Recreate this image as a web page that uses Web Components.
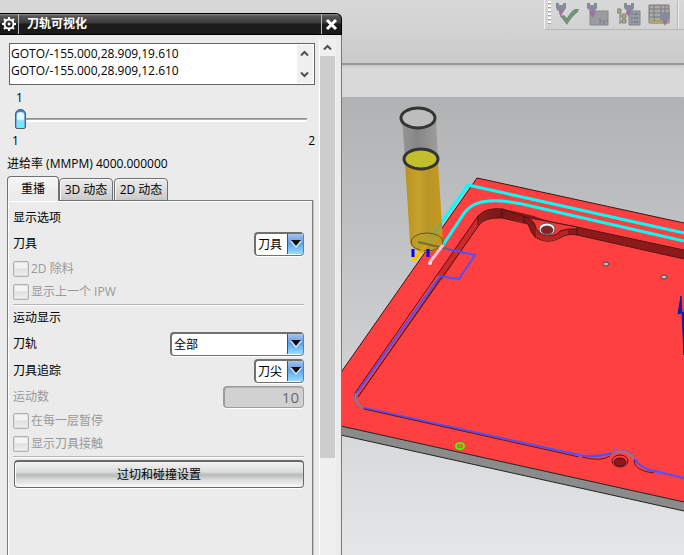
<!DOCTYPE html>
<html lang="zh-CN">
<head>
<meta charset="utf-8">
<title>刀轨可视化</title>
<style>
html,body{margin:0;height:100%}
body{font:12px/17px "Open Sans","Noto Sans CJK SC",sans-serif;color:#000;overflow:hidden}
</style>
</head>
<body>
<cam-app></cam-app>
<script>
function define(name, html, init){
  const t=document.createElement('template');
  t.innerHTML='<style>*{box-sizing:border-box}:host([hidden]){display:none}</style>'+html;
  customElements.define(name,class extends HTMLElement{
    connectedCallback(){
      if(this.shadowRoot)return;
      const r=this.attachShadow({mode:'open'});
      r.append(t.content.cloneNode(true));
      if(init)init.call(this,r);
    }
  });
}

define('tool-bar',`
<style>
:host{display:flex;flex-direction:column;height:97px;background:#d9d9d9}
.top{height:65px;display:flex;justify-content:flex-end;align-items:flex-start;background:linear-gradient(#d8d8d8,#cbcbcb);border-bottom:2px solid #989898;box-shadow:0 2px 2px #c8c8c8}
.tools{display:flex;align-items:center;height:30px;padding-left:3px;border-left:1px solid #f2f2f2;border-bottom:1px solid #b8b8b8;flex:0 0 140px}
.grip{width:3px;height:24px;margin-bottom:4px;background:repeating-linear-gradient(#fff 0 2px,#a4a4a4 2px 3px,transparent 3px 4px)}
button{border:0;background:none;padding:0;width:24px;height:26px;margin:0 3px 2px 4px}
svg{display:block;width:24px;height:26px}
.end{width:2px;height:28px;margin-left:2px;background:#eee;border-left:1px solid #b6b6b6}
</style>
<div class="top"><div class="tools" role="toolbar" aria-label="操作">
<span class="grip"></span>
<button aria-label="生成刀轨"><svg viewBox="0 0 24 26"><path d="M5 15l4-1 3 3Q16 10 20 8l4 0-1 3Q17 15 12 24z" fill="#719477"/><path d="M1 2h3v2h4V2h3v5l-2 3H3L1 7z" fill="#858b9b"/><path d="M4 10h5l-2 3-1 3-2-4z" fill="#a070a7"/></svg></button>
<button aria-label="重播刀轨"><svg viewBox="0 0 24 26"><path d="M4 10h18v14H4z" fill="#999ca1" stroke="#85888e"/><path d="M14 20h8M14 17v7M18 20v4" stroke="#7e8087" fill="none"/><path d="M1 2h3v2h4V2h3v5l-2 3H4L1 7z" fill="#858b9b"/><path d="M4 10h6l-3 7-3-4z" fill="#a070a7"/></svg></button>
<button aria-label="列出刀轨"><svg viewBox="0 0 24 26"><path d="M12 10h11v14H12z" fill="#969ba5" stroke="#81858e"/><path d="M14 13h2M17 13h4M14 17h2M17 17h4M14 21h2M17 21h4" stroke="#686d76"/><path d="M3 12v11M3 15h6M3 21h6" stroke="#777" fill="none"/><path d="M0 8h4v4H0zM5 13h4v4H5zM5 18h4v4H5z" fill="#aaa982" stroke="#858579"/><path d="M7 2h3v2h4V2h3v5l-2 3h-5L7 7z" fill="#858b9b"/><path d="M9 10h5l-2 6-3-4z" fill="#a070a7"/></svg></button>
<button aria-label="确认刀轨"><svg viewBox="0 0 24 26"><path d="M1 4h20v18H1z" fill="#a9aba9" stroke="#747674"/><path d="M1 19h20v3H1z" fill="#aaa56f"/><path d="M1 8h20M1 12h20M1 16h20M6 4v16M13 4v16M17 4v16" stroke="#7b7d7b"/><path d="M12 11h3v2h4v-2h3v5l-2 3h-6l-2-2z" fill="#858b9b"/><path d="M15 19h5l-3 6-2-4z" fill="#a070a7"/></svg></button>
<span class="end"></span>
</div></div>`);

define('part-view',`
<style>:host{display:block;min-height:0;background:linear-gradient(#b1b2b3,#e5e6e7)}svg{display:block;width:100%;height:100%}</style>
<svg viewBox="0 97 684 458" preserveAspectRatio="xMinYMin slice" role="img" aria-label="零件与刀具">
<defs>
<linearGradient id="y"><stop offset="0" stop-color="#b99020"/><stop offset=".35" stop-color="#c7a32c"/><stop offset=".6" stop-color="#b8952a"/><stop offset="1" stop-color="#c69a1c"/></linearGradient>
<linearGradient id="g"><stop offset="0" stop-color="#929292"/><stop offset=".4" stop-color="#7f7f7f"/><stop offset="1" stop-color="#999"/></linearGradient>
<linearGradient id="w"><stop offset="0" stop-color="#b62a2a"/><stop offset=".25" stop-color="#7c1818"/><stop offset=".45" stop-color="#8d1a1b"/><stop offset="1" stop-color="#8d1a1b"/></linearGradient>
</defs>
<path d="M300 417L684 502V511L300 426z" fill="#8b8b8b"/>
<path d="M477 178L684 223V502L300 417V431z" fill="#ff4040"/>
<path d="M300 417L684 502M300 426L684 511" stroke="#222" fill="none"/>
<path d="M684 223L477 178L300 431" stroke="#3a1515" fill="none"/>
<path d="M684 250L577 227L560 224Q542 219 534 216L522 213L503 209Q486 207 478 216L438 274L440 280L478 225Q485 217 502 218L523 222L528 224Q531 233 535 237Q547 245 560 238Q567 233 577 235L684 259z" fill="url(#w)"/>
<path d="M478 216L438 274L442 280L479 225z" fill="#cd2a2c"/>
<path d="M684 250L577 227L525 217L503 209Q486 207 478 216L355 393Q353 403 364 408L579 455" stroke="#571515" fill="none"/>
<path d="M684 259L577 235Q567 233 560 238Q547 245 535 237Q531 233 528 224L502 218Q485 217 479 225L358 397" stroke="#571515" fill="none"/>
<path d="M478 216v9M502 209v9M524 216v7M577 227v8" stroke="#421010"/>
<path d="M525 217Q534 219 536 228C540 239 557 237 560 231Q568 228 577 229L577 227z" fill="#ed3b3c" stroke="#571515"/>
<path d="M536 229C540 239 557 237 560 232L568 230V234Q563 235 560 238Q547 245 536 237z" fill="#b82525"/>
<ellipse cx="547" cy="229" rx="8" ry="6" fill="#fff" stroke="#555"/><ellipse cx="547" cy="230" rx="6" ry="4" fill="#8d1f1f" stroke="#444"/>
<g stroke="#444"><ellipse cx="606" cy="264" rx="3" ry="2" fill="#bbb"/><ellipse cx="664" cy="277" rx="3" ry="2" fill="#bbb"/></g>
<g fill="none" stroke="#00ffff" stroke-width="3"><path d="M442 222L468 185L522 197L684 233"/><path d="M443 245L465 212Q473 202 489 201Q503 200 522 204L684 241"/></g>
<path d="M418 242L442 248L475 255L459 279L440 276L356 394Q353 404 364 408L579 455Q597 458 612 453Q628 448 634 458Q641 470 659 472L684 478" fill="none" stroke="#4b51ff" stroke-width="2"/>
<path d="M356 393Q353 402 363 408M612 453Q628 448 634 459" fill="none" stroke="#9b7b76" stroke-width="2"/>
<path d="M582 457Q601 462 610 456M634 460Q634 471 654 473M440 279L358 397M364 409L579 457" stroke="#6b1515" fill="none"/>
<path d="M575 455h8M579 452v7M614 448v6M655 473h9M659 469v8" stroke="#6c55ff"/>
<ellipse cx="620" cy="461" rx="8" ry="6" fill="#ff4040" stroke="#571515"/><ellipse cx="620" cy="462" rx="6" ry="4" fill="#8b1b1b" stroke="#421010"/>
<ellipse cx="460" cy="446" rx="4" ry="3" fill="#ff4040" stroke="#40ff00" stroke-width="2"/><path d="M458 446h4M460 444v4" stroke="#b5a200"/>
<path d="M681 296L678 314L684 312V355L682 314z" fill="#0820a5" stroke="#0820a5"/>
<path d="M402 119L436 119L438 159L405 159z" fill="url(#g)" opacity=".88"/>
<ellipse cx="418" cy="118" rx="17" ry="10" fill="#bdbdbd" stroke="#353535" stroke-width="3"/>
<path d="M414 260L427 243" stroke="#ffbd00" stroke-width="4"/>
<path d="M405 162L438 162L443 242Q440 252 427 252Q412 252 410 242z" fill="url(#y)"/>
<path d="M431 251L442 235V242Q440 248 431 251z" fill="#d07d22"/>
<path d="M427 245L441 223" stroke="#8da450" stroke-width="4"/>
<ellipse cx="427" cy="242" rx="16" ry="9" fill="#b89f25" fill-opacity=".6" stroke="#66541d"/>
<ellipse cx="421" cy="159" rx="17" ry="10" fill="#c2be2c" stroke="#353535" stroke-width="3"/>
<path d="M427 244L421 252" stroke="#dba010" stroke-width="3"/>
<path d="M418 242L448 249" stroke="#77673c" stroke-width="2"/>
<path d="M412 258l5 1-4 3z" fill="#ffc400" stroke="#ffc400"/>
<path d="M430 262L443 245" stroke="#ffc5d4" stroke-width="3"/><circle cx="430" cy="263" r="2" fill="#ffdce5"/>
<path d="M413 249v8M428 249v8" stroke="#0000f5" stroke-width="3"/>
</svg>`);

define('dialog-title',`
<style>
:host{display:flex;height:22px;border:1px solid #000;border-left:0;border-radius:0 6px 0 0;background:linear-gradient(#8c8f8f 0,#555 2px,#3b3b3b 9px,#1b1b1b 10px,#1b1b1b);color:#fff;overflow:hidden}
button{flex:none;width:19px;border:0;border-right:1px solid #bbb;background:none;padding:0;display:grid;place-items:center}
button:last-child{width:20px;border-right:0;border-left:1px solid #bbb}
h1{flex:1;margin:0;padding-left:8px;font:700 12px/20px "Open Sans","Noto Sans CJK SC",sans-serif}
svg{display:block}
</style>
<button aria-label="对话框选项"><svg width="16" height="16" viewBox="0 0 16 16"><g stroke="#fff" fill="none"><circle cx="8" cy="8" r="4.5" stroke-width="2"/><path d="M8 1v3M8 12v3M1 8h3M12 8h3M3 3l2 2M11 11l2 2M3 13l2-2M11 5l2-2" stroke-width="2"/></g><circle cx="8" cy="8" r="1.5" fill="#fff"/></svg></button>
<h1><slot></slot></h1>
<button aria-label="关闭"><svg width="13" height="13" viewBox="0 0 13 13"><path d="M2 2l9 9M11 2l-9 9" stroke="#fff" stroke-width="3"/></svg></button>`);

define('scroll-rail',`
<style>
:host{display:flex;flex-direction:column;width:17px;background:#f0f0f0;border-left:1px solid #fff}
:host([compact]){width:16px;justify-content:space-between;border:0}
button{border:0;padding:0;height:17px;width:15px;background:none;display:grid;place-items:center;flex:none}
i{display:none;width:15px;height:402px;background:#cdcdcd}
:host(:not([compact])) i{display:block}
:host(:not([compact])) .down{display:none}
</style>
<button aria-label="向上滚动"><svg width="9" height="7" viewBox="0 0 9 7"><path d="M1 5.5L4.5 2L8 5.5" fill="none" stroke="#505050" stroke-width="2"/></svg></button><i></i>
<button class="down" aria-label="向下滚动"><svg width="9" height="7" viewBox="0 0 9 7"><path d="M1 1.5L4.5 5L8 1.5" fill="none" stroke="#505050" stroke-width="2"/></svg></button>`);

define('goto-list',`
<style>
:host{display:flex;height:42px;border:1px solid #646464;background:#fff;padding:1px}
ul{flex:1;margin:0;padding:0;list-style:none}
li{line-height:17px}
</style>
<ul role="listbox" aria-label="刀轨列表"><li role="option">GOTO/-155.000,28.909,19.610</li><li role="option">GOTO/-155.000,28.909,12.610</li></ul>
<scroll-rail compact></scroll-rail>`);

define('step-slider',`
<style>
:host{display:block;padding:4px 0 0 5px}
output{display:block;padding-left:4px}
.ends{display:flex;justify-content:space-between}
input{appearance:none;display:block;width:calc(100% - 11px);height:20px;margin:4px 8px 2px 3px;background:none}
input::-webkit-slider-runnable-track{height:4px;background:linear-gradient(#8f8f8f 0 1px,#aaa 1px 2px,#fff 2px);border-radius:1px}
input::-webkit-slider-thumb{appearance:none;width:11px;height:20px;margin-top:-9px;border:1px solid #555c66;border-radius:5px 5px 2px 2px;background:linear-gradient(#e9f7ff 0 50%,#8fdcf8 60%,#5ff0ff);box-shadow:inset 0 2px 1px #2b7cd4,inset 1px 0 #79b9e4,inset -1px 0 #79b9e4}
</style>
<output for="s">1</output><input id="s" type="range" min="1" max="2" value="1" aria-label="运动步"><div class="ends"><span>1</span><span>2</span></div>`);

define('tab-strip',`
<style>
:host{display:flex;align-items:flex-end;height:25px;position:relative;z-index:1}
button{font:inherit;color:inherit;height:23px;border:1px solid #707070;border-radius:4px 4px 0 0;background:linear-gradient(#ececec,#dcdcdc 50%,#c9c9c9);padding:0;width:54px;margin-right:1px;box-shadow:inset 1px 1px #f8f8f8}
button[aria-selected=true]{width:52px;height:25px;margin:0;border-bottom:0;background:linear-gradient(#f5f7f7,#ebebeb 70%);padding-bottom:1px}
</style>
<button role="tab" aria-selected="true">重播</button><button role="tab">3D 动态</button><button role="tab">2D 动态</button>`);

define('form-row',`
<style>
:host{display:flex;align-items:center;justify-content:space-between;height:27px}
:host([short]){height:25px}
:host([disabled]){color:#999}
</style>
<label id="l"></label>
<slot></slot>`,function(r){
  const l=r.getElementById('l');
  l.textContent=this.getAttribute('label');
  l.addEventListener('click',()=>this.firstElementChild.shadowRoot.querySelector('select,input').focus());
});

define('drop-down',`
<style>
:host{display:inline-grid;width:50px}
:host([wide]){width:134px}
select,i{grid-area:1/1}
select{appearance:none;width:100%;height:24px;font:inherit;color:inherit;background:#fff;border:2px solid #707070;border-right-color:#64809f;border-bottom-width:1px;border-radius:4px;padding:0 18px 0 2px;margin:0;box-shadow:0 1px #fff}
i{justify-self:end;align-self:center;width:16px;height:20px;margin-right:1px;pointer-events:none;border-left:1px solid #185aac;background:linear-gradient(#a8c2ee,#5e9de8 45%,#67b2f3 60%,#9cdafc);display:grid;place-items:center}
</style>
<select></select><i><svg width="12" height="8" viewBox="0 0 12 8"><path d="M0 1h12L6 8z" fill="#dceefc"/><path d="M1 0h10L6 6z" fill="#111"/></svg></i>`,
function(r){const s=r.querySelector('select');s.add(new Option(this.getAttribute('value')));s.setAttribute('aria-label',this.getAttribute('label'))});

define('num-field',`
<style>
:host{display:block;width:81px}
input{display:block;width:100%;height:22px;border:1px solid #9c9c9c;border-left-width:2px;border-radius:4px;background:#d1d1d1;color:#6a6a6a;font:15px/20px "Open Sans",sans-serif;text-align:right;padding:0 4px;box-shadow:0 1px #fff,inset 0 1px #b0b0b0}
</style>
<input disabled value="10" aria-label="运动数">`);

define('check-row',`
<style>
:host{display:flex;align-items:center;height:23px;color:#999}
label{display:flex;align-items:center;gap:2px}
input{appearance:none;width:16px;height:16px;margin:0;border:1px solid #b0b0b0;border-radius:2px;background:linear-gradient(#f3f3f3 40%,#dfdfdf 50%,#f1f1f1);box-shadow:inset 0 0 0 1px #e0e0e0}
</style>
<label><input type="checkbox" disabled><slot></slot></label>`);

define('replay-panel',`
<style>
:host{display:block;flex:1;border:1px solid #7c7c7c;border-bottom:0;padding:5px 8px 0 5px;margin-top:-1px;box-shadow:inset 1px 1px #fff,1px 0 #c6c6c6}
h2{margin:0;font:inherit;line-height:24px}
hr{height:2px;margin:1px 0 0;border:0;border-top:1px solid #b5b5b5;background:#fff}
.go{display:block;width:calc(100% - 1px);height:28px;margin:2px 0 0 1px;padding:0;font:inherit;color:inherit;border:1px solid #686868;border-top-width:2px;border-radius:4px;background:linear-gradient(#f1f1f1,#dedede 38%,#b7b9ba 52%,#d9d9d9 70%,#fafafa);box-shadow:0 1px #fff,inset 1px 0 #fff}
</style>
<h2>显示选项</h2>
<form-row label="刀具"><drop-down label="刀具" value="刀具"></drop-down></form-row>
<check-row>2D 除料</check-row><check-row>显示上一个 IPW</check-row>
<hr>
<h2>运动显示</h2>
<form-row label="刀轨"><drop-down wide label="刀轨" value="全部"></drop-down></form-row>
<form-row label="刀具追踪"><drop-down label="刀具追踪" value="刀尖"></drop-down></form-row>
<form-row short disabled label="运动数"><num-field></num-field></form-row>
<check-row>在每一层暂停</check-row><check-row>显示刀具接触</check-row>
<hr>
<button class="go">过切和碰撞设置</button>`);

define('path-dialog',`
<style>
:host{display:flex;flex-direction:column;overflow:hidden}
.body{flex:1;display:flex;gap:4px;min-height:0;background:#ebebeb;border-right:1px solid #777;padding:4px 5px 0 0}
.main{flex:1;display:flex;flex-direction:column;padding-left:7px;min-width:0}
goto-list{margin:4px 0 0 2px}
.rate{margin:6px 0 4px;line-height:17px}
replay-panel{margin-right:2px}
</style>
<dialog-title>刀轨可视化</dialog-title>
<div class="body"><div class="main">
<goto-list></goto-list><step-slider></step-slider>
<div class="rate">进给率 (MMPM) 4000.000000</div>
<tab-strip role="tablist"></tab-strip><replay-panel role="tabpanel"></replay-panel>
</div><scroll-rail></scroll-rail></div>`);

define('cam-app',`
<style>
:host{display:flex;flex-direction:column;height:100vh;position:relative;overflow:hidden}
tool-bar{flex:none}part-view{flex:1}
path-dialog{position:absolute;left:0;top:13px;bottom:0;width:50%}
</style>
<tool-bar></tool-bar><part-view></part-view><path-dialog></path-dialog>`);
</script>
</body>
</html>
